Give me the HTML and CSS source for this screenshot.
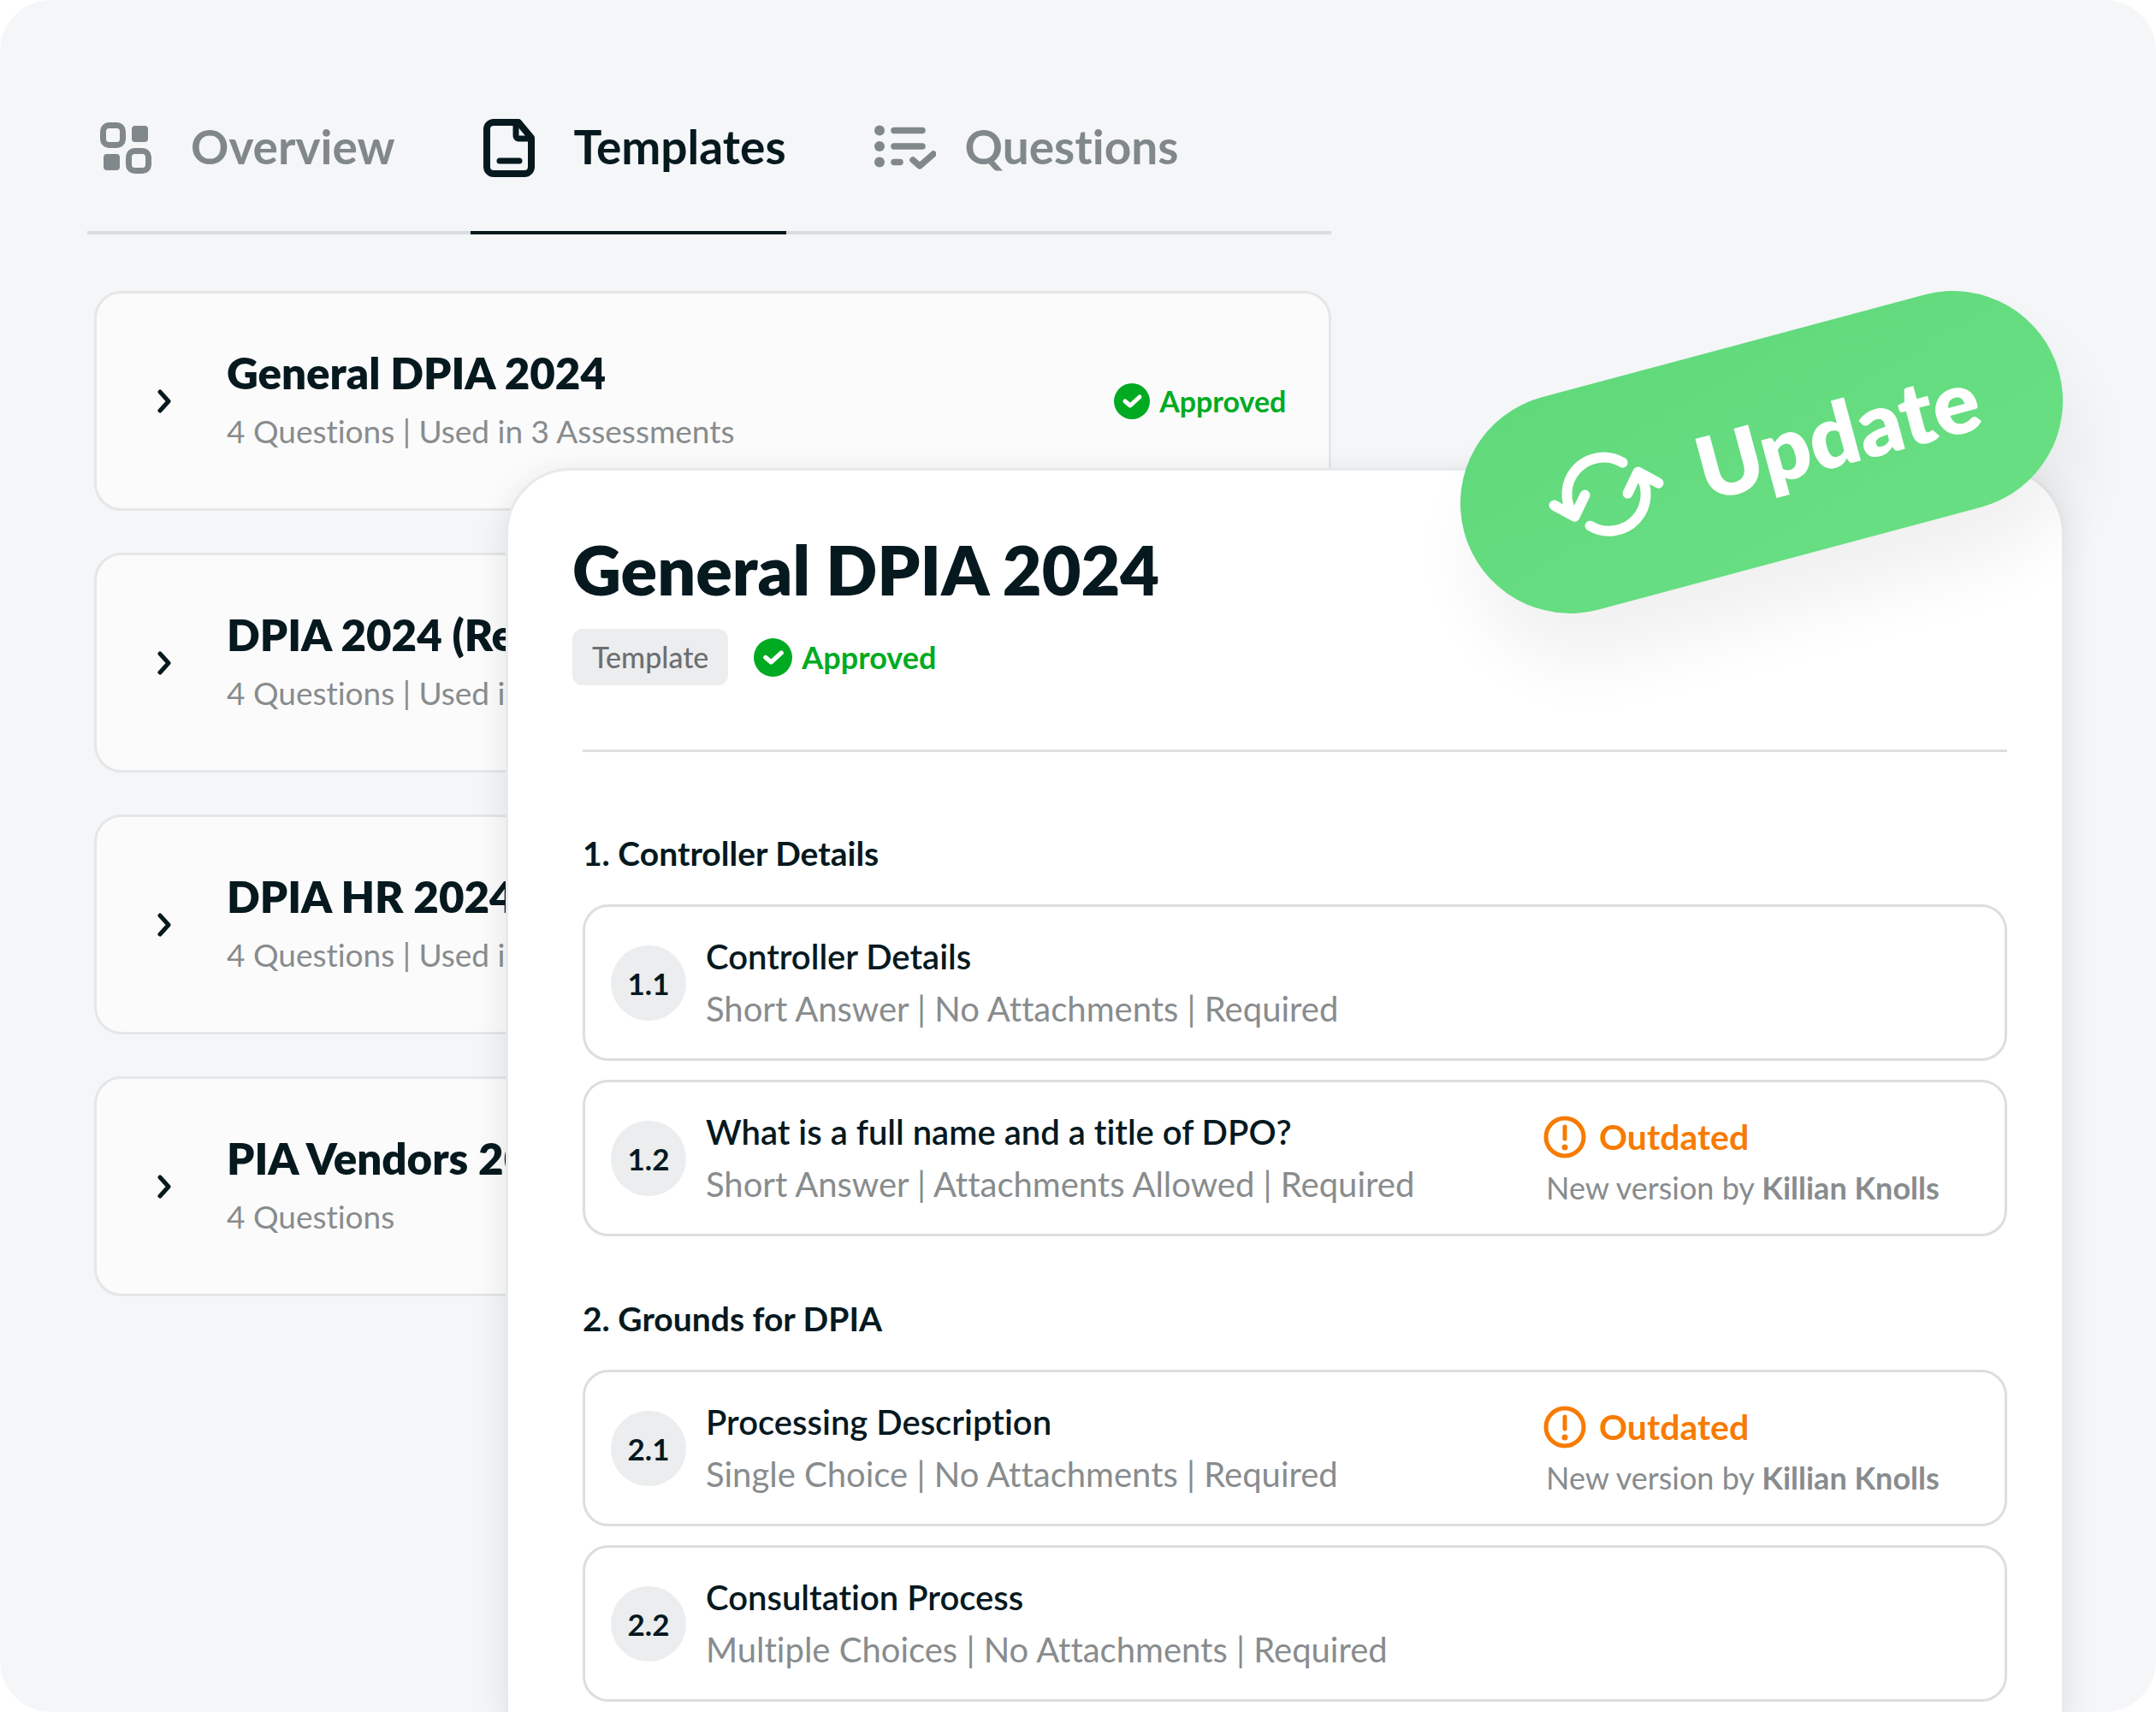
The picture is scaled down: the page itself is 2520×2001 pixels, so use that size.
FILE: index.html
```html
<!DOCTYPE html>
<html lang="en">
<head>
    <meta charset="UTF-8">
    <meta name="viewport" content="width=device-width, initial-scale=1.0">
    <title>DPIA Templates</title>
    <link rel="stylesheet" href="styles.css">
</head>
<body>
    <!-- shared status icons -->
    <svg class="sprite" aria-hidden="true">
        <symbol id="check" viewBox="0 0 42 42">
            <circle cx="21" cy="21" r="21" fill="currentColor"/>
            <path d="M13 21l6 5 11-10" fill="none" stroke="#fff" stroke-width="5" stroke-linecap="round" stroke-linejoin="round"/>
        </symbol>
        <symbol id="alert" viewBox="0 0 50 50">
            <circle cx="25" cy="25" r="22" fill="none" stroke="currentColor" stroke-width="5"/>
            <path d="M25 13v14" fill="none" stroke="currentColor" stroke-width="5" stroke-linecap="round"/>
            <circle cx="25" cy="37" r="3.5" fill="currentColor"/>
        </symbol>
        <symbol id="chevron" viewBox="0 0 18 28">
            <path d="M4 3l10 11-10 11" fill="none" stroke="currentColor" stroke-width="5" stroke-linecap="round" stroke-linejoin="round"/>
        </symbol>
    </svg>

    <div class="page">
        <main class="library">
            <nav class="tabs">
                <button class="tab">
                    <svg class="tab-icon" viewBox="0 0 72 72" fill="none" stroke="currentColor" stroke-width="7">
                        <rect x="3.5" y="11.5" width="23" height="23" rx="7"/>
                        <rect x="33.5" y="41.5" width="23" height="23" rx="7"/>
                        <rect x="37" y="12" width="19" height="19" rx="4" fill="currentColor" stroke="none"/>
                        <rect x="4" y="45" width="19" height="19" rx="4" fill="currentColor" stroke="none"/>
                    </svg>
                    Overview
                </button>
                <button class="tab active">
                    <svg class="tab-icon" viewBox="0 0 72 72" fill="none" stroke="currentColor" stroke-width="8" stroke-linecap="round" stroke-linejoin="round">
                        <path d="M12 8h29l15 18v34a8 8 0 0 1-8 8H12a8 8 0 0 1-8-8V16a8 8 0 0 1 8-8z"/>
                        <path d="M38 9v15a3 3 0 0 0 3 3h14" stroke-width="7"/>
                        <path d="M19 53h23" stroke-width="7"/>
                    </svg>
                    Templates
                </button>
                <button class="tab">
                    <svg class="tab-icon" viewBox="0 0 72 72" fill="none" stroke="currentColor" stroke-width="7.5" stroke-linecap="round" stroke-linejoin="round">
                        <path d="M23 17.5h33M23 36h33M23 54.5h7M45 52l8 7 16-14"/>
                        <g fill="currentColor" stroke="none">
                            <circle cx="6" cy="17.5" r="6"/>
                            <circle cx="6" cy="36" r="6"/>
                            <circle cx="6" cy="54.5" r="6"/>
                        </g>
                    </svg>
                    Questions
                </button>
            </nav>

            <div class="templates">
                <article class="template">
                    <button class="toggle" aria-label="Expand"><svg><use href="#chevron"/></svg></button>
                    <div class="template-text">
                        <h3>General DPIA 2024</h3>
                        <p>4 Questions | Used in 3 Assessments</p>
                    </div>
                    <span class="status approved"><svg><use href="#check"/></svg>Approved</span>
                </article>
                <article class="template">
                    <button class="toggle" aria-label="Expand"><svg><use href="#chevron"/></svg></button>
                    <div class="template-text">
                        <h3>DPIA 2024 (Rev)</h3>
                        <p>4 Questions | Used in 3</p>
                    </div>
                </article>
                <article class="template">
                    <button class="toggle" aria-label="Expand"><svg><use href="#chevron"/></svg></button>
                    <div class="template-text">
                        <h3>DPIA HR 2024</h3>
                        <p>4 Questions | Used in 3</p>
                    </div>
                </article>
                <article class="template">
                    <button class="toggle" aria-label="Expand"><svg><use href="#chevron"/></svg></button>
                    <div class="template-text">
                        <h3>PIA Vendors 2024</h3>
                        <p>4 Questions</p>
                    </div>
                </article>
            </div>
        </main>

        <section class="panel">
            <button class="update">
                <svg viewBox="0 0 140 140" fill="none" stroke="#fff" stroke-width="12" stroke-linecap="round" stroke-linejoin="round">
                    <g transform="translate(70 70) rotate(15)">
                        <path d="M19-37A43 43 0 0 0-38 25M-61 13l24 13 12-25"/>
                        <path d="M-19 37A43 43 0 0 0 38-25M61-13l-24-13-12 25"/>
                    </g>
                </svg>
                Update
            </button>

            <header class="panel-head">
                <h1>General DPIA 2024</h1>
                <div class="meta">
                    <span class="tag">Template</span>
                    <span class="status approved large"><svg><use href="#check"/></svg>Approved</span>
                </div>
            </header>

            <div class="sections">
                <h2>1. Controller Details</h2>
                <div class="question">
                    <span class="number">1.1</span>
                    <div class="question-text">
                        <h4>Controller Details</h4>
                        <p>Short Answer | No Attachments | Required</p>
                    </div>
                </div>
                <div class="question">
                    <span class="number">1.2</span>
                    <div class="question-text">
                        <h4>What is a full name and a title of DPO?</h4>
                        <p>Short Answer | Attachments Allowed | Required</p>
                    </div>
                    <div class="version">
                        <span class="status outdated"><svg><use href="#alert"/></svg>Outdated</span>
                        <p>New version by <b>Killian Knolls</b></p>
                    </div>
                </div>

                <h2>2. Grounds for DPIA</h2>
                <div class="question">
                    <span class="number">2.1</span>
                    <div class="question-text">
                        <h4>Processing Description</h4>
                        <p>Single Choice | No Attachments | Required</p>
                    </div>
                    <div class="version">
                        <span class="status outdated"><svg><use href="#alert"/></svg>Outdated</span>
                        <p>New version by <b>Killian Knolls</b></p>
                    </div>
                </div>
                <div class="question">
                    <span class="number">2.2</span>
                    <div class="question-text">
                        <h4>Consultation Process</h4>
                        <p>Multiple Choices | No Attachments | Required</p>
                    </div>
                </div>
            </div>
        </section>
    </div>
</body>
</html>
```
FILE: styles.css
```css
* {
    box-sizing: border-box;
}
body {
    margin: 0;
    background: #fff;
    color: #06191f;
    font-family: Lato, "Liberation Sans", sans-serif;
    font-variant-ligatures: none;
}
h1, h2, h3, h4, p {
    margin: 0;
}
button {
    font: inherit;
    border: none;
    background: none;
    padding: 0;
    cursor: pointer;
}
.sprite {
    display: none;
}

/* the panel shares the grid cell with the list and lies over it */
.page {
    display: grid;
    min-height: 100vh;
    overflow: hidden;
    background: #f4f6f8;
    border-radius: 60px;
}
.library,
.panel {
    grid-area: 1 / 1;
}

.library {
    width: 62%;
    padding: 72px 6px 0 102px;
}
.tabs {
    display: flex;
    gap: 88px;
    border-bottom: 4px solid #dadddf;
}
.tab {
    display: flex;
    align-items: center;
    gap: 34px;
    height: 202px;
    margin-bottom: -4px;
    padding-left: 15px;
    border-bottom: 4px solid transparent;
    color: #81888b;
    font-size: 55px;
    font-weight: 700;
}
.tab.active {
    color: #06191f;
    border-color: #06191f;
}
.tab-icon {
    width: 72px;
    height: 72px;
}

.templates {
    display: flex;
    flex-direction: column;
    gap: 49px;
    margin-top: 66px;
    padding-left: 8px;
}
.template {
    display: flex;
    align-items: center;
    height: 257px;
    padding: 0 50px 0 70px;
    background: #fbfbfb;
    border: 3px solid #e4e6e8;
    border-radius: 32px;
}
.toggle {
    width: 82px;
    color: #06191f;
    text-align: left;
}
.toggle svg {
    display: block;
    width: 18px;
    height: 28px;
}
.template-text {
    flex: 1;
    padding-top: 6px;
    white-space: nowrap;
}
.template h3 {
    font-size: 51px;
    line-height: 64px;
    font-weight: 800;
}
.template p {
    color: #888c8e;
    font-size: 37px;
    line-height: 72px;
}

.status {
    display: flex;
    align-items: center;
    gap: 11px;
    font-size: 34px;
    font-weight: 700;
}
.status svg {
    width: 42px;
    height: 42px;
}
.approved {
    color: #00ab22;
}
.approved.large {
    font-size: 36px;
}
.approved.large svg {
    width: 45px;
    height: 45px;
}
.outdated {
    gap: 15px;
    color: #f77b00;
    font-size: 41px;
    line-height: 50px;
}
.outdated svg {
    width: 50px;
    height: 50px;
}

.panel {
    position: relative;
    margin: 547px 107px 0 591px;
    background: #fff;
    border: 3px solid #e8e9ea;
    border-bottom: none;
    border-radius: 76px 76px 0 0;
    box-shadow: 0 10px 40px rgba(20, 30, 40, 0.1);
}
.update {
    position: absolute;
    top: -150px;
    right: -9px;
    display: flex;
    align-items: center;
    gap: 41px;
    width: 720px;
    height: 257px;
    padding-left: 102px;
    border-radius: 129px;
    background: linear-gradient(165deg, #60d97b, #69df83);
    box-shadow: 0 60px 80px rgba(0, 0, 0, 0.06);
    color: #fff;
    font-size: 102px;
    font-weight: 800;
    transform: rotate(-15deg);
}
.update svg {
    width: 140px;
    height: 140px;
}

.panel-head {
    margin-left: 75px;
    padding-top: 64px;
}
.panel-head h1 {
    font-size: 79px;
    line-height: 104px;
    font-weight: 800;
}
.meta {
    display: flex;
    align-items: center;
    gap: 30px;
    margin-top: 17px;
}
.tag {
    padding: 0 23px;
    border-radius: 12px;
    background: #ecedee;
    color: #6c6f70;
    font-size: 34px;
    line-height: 66px;
    font-weight: 500;
}

.sections {
    display: flex;
    flex-direction: column;
    gap: 22px;
    margin: 75px 64px 0 87px;
    padding-bottom: 12px;
    border-top: 3px solid #dcdedf;
}
.sections h2 {
    margin: 42px 0 6px;
    font-size: 39px;
    line-height: 64px;
    font-weight: 700;
}
.sections h2:first-child {
    margin-top: 86px;
}
.question {
    display: flex;
    align-items: center;
    height: 183px;
    padding: 0 30px;
    border: 3px solid #dcdedf;
    border-radius: 30px;
}
.number {
    width: 88px;
    margin-right: 23px;
    border-radius: 50%;
    background: #ebedee;
    font-size: 35px;
    line-height: 88px;
    font-weight: 700;
    text-align: center;
}
.question-text {
    flex: 1;
}
.question h4 {
    font-size: 40px;
    line-height: 61px;
    font-weight: 600;
}
.question-text p {
    color: #888c8e;
    font-size: 40px;
    line-height: 61px;
}
.version {
    width: 509px;
    padding-top: 18px;
}
.version p {
    padding-left: 3px;
    color: #888c8e;
    font-size: 36px;
    line-height: 68px;
}
```
